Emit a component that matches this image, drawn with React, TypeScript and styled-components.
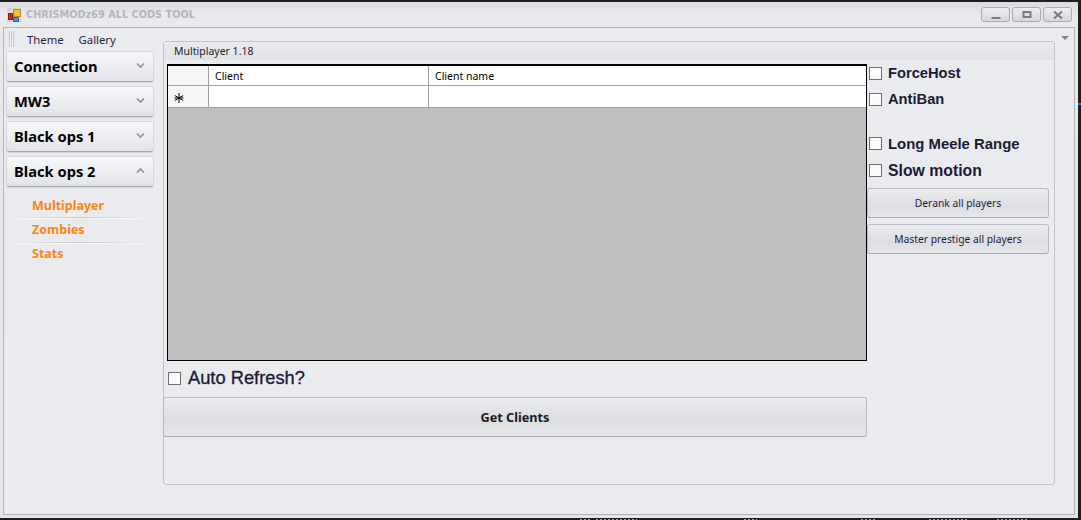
import React from "react";
import styled, { createGlobalStyle } from "styled-components";

const GlobalStyle = createGlobalStyle`
  html, body {
    margin: 0;
    padding: 0;
    background: #1f1f22;
  }
  body {
    width: 1081px;
    height: 520px;
    overflow: hidden;
    font-family: "Liberation Sans", Arial, sans-serif;
  }
`;

const Chevron = ({ up }: { up?: boolean }) => (
  <svg width="9" height="7" viewBox="0 0 9 7">
    <path
      d={up ? "M1 5.5 L4.5 2 L8 5.5" : "M1 1.5 L4.5 5 L8 1.5"}
      fill="none"
      stroke="#8f929a"
      strokeWidth="1.6"
    />
  </svg>
);

const Logo = () => (
  <svg width="14" height="14" viewBox="0 0 14 14">
    <rect x="0" y="0" width="14" height="14" fill="#cfd0d4" />
    <path d="M5 0V14M10 0V14M0 5H14M0 10H14" stroke="#eceded" strokeWidth="1" />
    <rect x="6.5" y="1.5" width="7" height="7" fill="#f2c230" stroke="#b08a24" />
    <rect x="1.5" y="5.5" width="4" height="6" fill="#cc2a20" stroke="#8a1d17" />
    <rect x="6.5" y="9.5" width="5" height="4" fill="#4a8fe6" stroke="#2f66b0" />
  </svg>
);

const StarMark = () => (
  <svg width="10" height="10" viewBox="0 0 10 10">
    <path d="M5 0V10M0.8 2.5L9.2 7.5M9.2 2.5L0.8 7.5M0.5 5H9.5" stroke="#000" strokeWidth="1" />
  </svg>
);

const fragments = [
  { gap: 580, w: 10 },
  { gap: 6, w: 41 },
  { gap: 107, w: 13 },
  { gap: 104, w: 16 },
  { gap: 52, w: 39 },
  { gap: 29, w: 31 },
];

const App = () => {
  return (
    <>
      <GlobalStyle />
      <Page>
        <WindowRow>
          <Window>
            <TitleBar>
              <Logo />
              <Title>CHRISMODz69 ALL CODS TOOL</Title>
              <WindowButtons>
                <WindowButton aria-label="minimize">
                  <svg width="10" height="8" viewBox="0 0 10 8">
                    <rect x="0.5" y="6" width="9" height="2" fill="#7a7c84" />
                  </svg>
                </WindowButton>
                <WindowButton aria-label="maximize">
                  <svg width="10" height="8" viewBox="0 0 10 8">
                    <rect x="1.5" y="1" width="7" height="5" fill="none" stroke="#7a7c84" strokeWidth="2" />
                  </svg>
                </WindowButton>
                <WindowButton aria-label="close">
                  <svg width="10" height="8" viewBox="0 0 10 8">
                    <path d="M1 0.5 L9 7.5 M9 0.5 L1 7.5" stroke="#7a7c84" strokeWidth="2" />
                  </svg>
                </WindowButton>
              </WindowButtons>
            </TitleBar>
            <Client>
              <Sidebar>
                <MenuBar>
                  <Grip />
                  <MenuItem>Theme</MenuItem>
                  <MenuItem>Gallery</MenuItem>
                </MenuBar>
                <NavList>
                  <NavHeader>
                    Connection
                    <Chevron />
                  </NavHeader>
                  <NavHeader>
                    MW3
                    <Chevron />
                  </NavHeader>
                  <NavHeader>
                    Black ops 1
                    <Chevron />
                  </NavHeader>
                  <NavHeader>
                    Black ops 2
                    <Chevron up />
                  </NavHeader>
                </NavList>
                <SubList>
                  <SubItem $h={24} $line>
                    Multiplayer
                  </SubItem>
                  <SubItem $h={25} $line>
                    Zombies
                  </SubItem>
                  <SubItem $h={22}>Stats</SubItem>
                </SubList>
              </Sidebar>
              <Main>
                <GroupBox>
                  <GroupHeader>Multiplayer 1.18</GroupHeader>
                  <GroupBody>
                    <LeftColumn>
                      <DataGrid>
                        <GridRow $head>
                          <RowCell />
                          <ClientCell>Client</ClientCell>
                          <NameCell>Client name</NameCell>
                        </GridRow>
                        <GridRow>
                          <RowCell $marker>
                            <StarMark />
                          </RowCell>
                          <ClientCell />
                          <NameCell />
                        </GridRow>
                      </DataGrid>
                      <AutoRefresh>
                        <CheckBox />
                        <AutoLabel>Auto Refresh?</AutoLabel>
                      </AutoRefresh>
                      <GetClients>Get Clients</GetClients>
                    </LeftColumn>
                    <RightColumn>
                      <OptionRow $h={26}>
                        <CheckBox />
                        <OptionLabel>ForceHost</OptionLabel>
                      </OptionRow>
                      <OptionRow $h={26}>
                        <CheckBox />
                        <OptionLabel>AntiBan</OptionLabel>
                      </OptionRow>
                      <OptionRow $h={27} $top={18}>
                        <CheckBox />
                        <OptionLabel $size={14.9}>Long Meele Range</OptionLabel>
                      </OptionRow>
                      <OptionRow $h={27}>
                        <CheckBox />
                        <OptionLabel $size={15.8}>Slow motion</OptionLabel>
                      </OptionRow>
                      <SideButtons>
                        <SideButton>Derank all players</SideButton>
                        <SideButton>Master prestige all players</SideButton>
                      </SideButtons>
                    </RightColumn>
                  </GroupBody>
                </GroupBox>
                <MenuArrow />
              </Main>
            </Client>
          </Window>
          <DesktopEdge>
            <EdgeTick />
          </DesktopEdge>
        </WindowRow>
        <TaskStrip>
          {fragments.map((f, i) => (
            <TaskFragment key={i} $gap={f.gap} $w={f.w} />
          ))}
        </TaskStrip>
      </Page>
    </>
  );
};

const Page = styled.div`
  width: 1081px;
  height: 520px;
  padding-top: 2px;
  box-sizing: border-box;
  display: flex;
  flex-direction: column;
`;

const WindowRow = styled.div`
  display: flex;
  height: 516px;
  flex: none;
`;

const Window = styled.div`
  width: 1078px;
  flex: none;
  box-sizing: border-box;
  padding: 0 3px 3px 3px;
  display: flex;
  flex-direction: column;
  background: linear-gradient(#d9dbe0, #e8e9ed 12px, #e4e5e9);
`;

const DesktopEdge = styled.div`
  flex: 1;
  padding-top: 101px;
`;

const EdgeTick = styled.div`
  height: 2px;
  background: #0a84d8;
`;

const TaskStrip = styled.div`
  flex: 1;
  display: flex;
  align-items: flex-end;
`;

const TaskFragment = styled.div<{ $gap: number; $w: number }>`
  margin-left: ${({ $gap }) => $gap}px;
  width: ${({ $w }) => $w}px;
  height: 1px;
  background: repeating-linear-gradient(90deg, #a8a8ac 0 2px, #1f1f22 2px 4px);
`;

const TitleBar = styled.div`
  height: 25px;
  flex: none;
  display: flex;
  align-items: center;
  padding: 0 3px 0 4px;
`;

const Title = styled.span`
  margin-left: 5px;
  font-family: "DejaVu Sans", sans-serif;
  font-weight: 700;
  font-size: 9.75px;
  color: #b4b6bc;
`;

const WindowButtons = styled.div`
  margin-left: auto;
  display: flex;
  gap: 2px;
`;

const WindowButton = styled.div`
  width: 27px;
  height: 13px;
  border: 1px solid #a9abb2;
  border-radius: 3px;
  background: linear-gradient(#eceef1, #d5d7dc);
  display: flex;
  align-items: center;
  justify-content: center;
`;

const Client = styled.div`
  flex: 1;
  display: flex;
  min-height: 0;
  border: 1px solid #b4b6bc;
  background: #e9ebef;
`;

const Sidebar = styled.aside`
  width: 159px;
  flex: none;
`;

const MenuBar = styled.div`
  height: 20px;
  margin-top: 1px;
  display: flex;
  align-items: center;
  padding-left: 5px;
  gap: 15px;
  font-family: "Noto Sans", sans-serif;
  font-size: 11.3px;
  color: #2a2340;
`;

const Grip = styled.div`
  width: 5px;
  height: 16px;
  margin-right: -2px;
  background: repeating-linear-gradient(90deg, #c2c4ca 0 1px, #f6f6f8 1px 2px);
`;

const MenuItem = styled.span``;

const NavList = styled.div`
  margin: 3px 0 0 3px;
  display: flex;
  flex-direction: column;
  gap: 5px;
  width: 146px;
`;

const NavHeader = styled.div`
  height: 30px;
  box-sizing: border-box;
  border-radius: 2px;
  padding: 0 8px 2px 7px;
  display: flex;
  align-items: center;
  justify-content: space-between;
  font-family: "Noto Sans", sans-serif;
  font-weight: 700;
  font-size: 14.7px;
  color: #000;
  background: linear-gradient(#f6f7f9, #e2e4e9);
  border-bottom: 1px solid #a5a7ae;
  box-shadow: 0 0 1px 1px #d3d5da;
`;

const SubList = styled.div`
  margin: 7px 0 0 28px;
  display: flex;
  flex-direction: column;
`;

const SubItem = styled.div<{ $h: number; $line?: boolean }>`
  height: ${({ $h }) => $h}px;
  box-sizing: border-box;
  padding-bottom: 2px;
  display: flex;
  align-items: center;
  font-family: "Noto Sans", sans-serif;
  font-weight: 700;
  font-size: 12.5px;
  color: #ff8412;
  position: relative;
  &::after {
    content: "";
    display: ${({ $line }) => ($line ? "block" : "none")};
    position: absolute;
    left: -20px;
    width: 135px;
    bottom: 0;
    height: 1px;
    background: linear-gradient(90deg, #e9ebef, #c6c8cd 50%, #e9ebef);
    box-shadow: 0 1px 0 #f6f6f8;
  }
`;

const Main = styled.main`
  flex: 1;
  min-width: 0;
  padding: 13px 19px 29px 0;
  position: relative;
`;

const MenuArrow = styled.div`
  position: absolute;
  top: 8px;
  right: 5px;
  border-left: 4px solid transparent;
  border-right: 4px solid transparent;
  border-top: 4px solid #7f828a;
`;

const GroupBox = styled.section`
  height: 100%;
  box-sizing: border-box;
  border: 1px solid #c2c4ca;
  border-radius: 3px;
  display: flex;
  flex-direction: column;
`;

const GroupHeader = styled.div`
  height: 18px;
  flex: none;
  padding-left: 10px;
  display: flex;
  align-items: center;
  font-family: "Noto Sans", sans-serif;
  font-size: 10.5px;
  color: #1f1c2e;
  background: linear-gradient(#e9eaee, #e0e2e6);
`;

const GroupBody = styled.div`
  flex: 1;
  display: flex;
`;

const LeftColumn = styled.div`
  width: 703px;
  flex: none;
`;

const DataGrid = styled.div`
  margin: 4px 0 0 3px;
  width: 700px;
  height: 297px;
  box-sizing: border-box;
  border: 1px solid #000;
  border-top-width: 2px;
  background: #bfbfbf;
`;

const GridRow = styled.div<{ $head?: boolean }>`
  display: flex;
  height: ${({ $head }) => ($head ? "20px" : "22px")};
  border-bottom: 1px solid #a0a0a0;
  box-sizing: border-box;
  background: #fff;
`;

const Cell = styled.div`
  box-sizing: border-box;
  display: flex;
  align-items: center;
  padding-left: 6px;
  border-right: 1px solid #a0a0a0;
  font-family: "Noto Sans", sans-serif;
  font-size: 10.5px;
  color: #000;
`;

const RowCell = styled(Cell)<{ $marker?: boolean }>`
  width: 41px;
  background: #f6f6f7;
  padding-top: ${({ $marker }) => ($marker ? "2px" : "0")};
`;

const ClientCell = styled(Cell)`
  width: 220px;
`;

const NameCell = styled(Cell)`
  flex: 1;
  border-right: none;
`;

const AutoRefresh = styled.div`
  margin: 7px 0 0 4px;
  height: 20px;
  display: flex;
  align-items: center;
`;

const CheckBox = styled.div`
  width: 13px;
  height: 13px;
  box-sizing: border-box;
  border: 1px solid #6f6f73;
  background: #fbfbfc;
  flex: none;
`;

const AutoLabel = styled.span`
  margin-left: 7px;
  font-size: 18.3px;
  -webkit-text-stroke: 0.3px #1c1a33;
  color: #1c1a33;
`;

const GetClients = styled.button`
  display: block;
  margin: 9px 0 0 -1px;
  width: 704px;
  height: 40px;
  font-family: "Noto Sans", sans-serif;
  font-weight: 700;
  font-size: 12.7px;
  color: #1c1a24;
  padding: 0 0 0 -2px;
  border: 1px solid #b9bbc2;
  border-bottom-color: #a7a9b1;
  border-radius: 3px;
  background: linear-gradient(#ebecef, #dcdee2 55%, #e6e7ea);
`;

const RightColumn = styled.div`
  flex: 1;
  display: flex;
  flex-direction: column;
`;

const OptionRow = styled.div<{ $h: number; $top?: number }>`
  height: ${({ $h }) => $h}px;
  margin-top: ${({ $top }) => $top ?? 0}px;
  margin-left: 2px;
  display: flex;
  align-items: center;
`;

const OptionLabel = styled.span<{ $size?: number }>`
  margin-left: 6px;
  font-weight: 700;
  font-size: ${({ $size }) => $size ?? 14.7}px;
  color: #1c1a33;
`;

const SideButtons = styled.div`
  margin-top: 4px;
  display: flex;
  flex-direction: column;
  gap: 6px;
`;

const SideButton = styled.button`
  width: 182px;
  height: 30px;
  padding: 0;
  font-family: "Noto Sans", sans-serif;
  font-size: 10.3px;
  color: #1f1c3a;
  border: 1px solid #b9bbc2;
  border-bottom-color: #a7a9b1;
  border-radius: 3px;
  background: linear-gradient(#ebecef, #dcdee2 60%, #e6e7ea);
`;

export default App;
